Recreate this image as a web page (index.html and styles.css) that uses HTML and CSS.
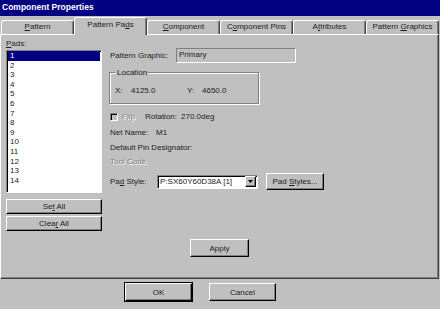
FILE: index.html
```html
<!DOCTYPE html>
<html lang="en">
<head>
    <meta charset="UTF-8">
    <meta name="viewport" content="width=device-width, initial-scale=1.0">
    <title>Component Properties</title>
    <link rel="stylesheet" href="styles.css">
</head>
<body>

    <div class="titlebar">Component Properties</div>

    <div class="tabs">
        <div class="tab"><u>P</u>attern</div>
        <div class="tab active">Pattern Pa<u>d</u>s</div>
        <div class="tab"><u>C</u>omponent</div>
        <div class="tab">C<u>o</u>mponent Pins</div>
        <div class="tab">A<u>t</u>tributes</div>
        <div class="tab">Pattern <u>G</u>raphics</div>
    </div>

    <div class="panel">
        <div class="columns">
            <div class="left">
                <div class="label"><u>P</u>ads:</div>
                <div class="listbox">
                    <div class="item selected">1</div>
                    <div class="item">2</div>
                    <div class="item">3</div>
                    <div class="item">4</div>
                    <div class="item">5</div>
                    <div class="item">6</div>
                    <div class="item">7</div>
                    <div class="item">8</div>
                    <div class="item">9</div>
                    <div class="item">10</div>
                    <div class="item">11</div>
                    <div class="item">12</div>
                    <div class="item">13</div>
                    <div class="item">14</div>
                </div>
                <button class="btn wide first">Se<u>t</u> All</button>
                <button class="btn wide">Clea<u>r</u> All</button>
            </div>

            <div class="right">
                <div class="row graphic-row">
                    <span class="graphic-label">Pattern Graphic:</span>
                    <div class="field">Primary</div>
                </div>

                <div class="group">
                    <span class="group-title">Location</span>
                    <div class="row coords">
                        <span class="coord-x">X:</span>
                        <span class="coord-xv">4125.0</span>
                        <span class="coord-y">Y:</span>
                        <span>4650.0</span>
                    </div>
                </div>

                <div class="row flip-row">
                    <span class="checkbox"></span>
                    <span class="disabled flip">Flip</span>
                    <span class="rot-label">Rotation:</span>
                    <span>270.0deg</span>
                </div>

                <div class="row net-row">
                    <span class="net-label">Net Name:</span>
                    <span>M1</span>
                </div>
                <div class="row pin-row">Default Pin Designator:</div>
                <div class="row tool-row disabled">Tool Code</div>

                <div class="row style-row">
                    <span class="style-label">Pa<u>d</u> Style:</span>
                    <div class="select">
                        <span class="select-text">P:SX60Y60D38A [1]</span>
                        <span class="arrow">
                            <svg width="5" height="3" viewBox="0 0 5 3"><path d="M0 0h5L2.5 3z" fill="#000"/></svg>
                        </span>
                    </div>
                    <button class="btn styles-btn">Pad <u>S</u>tyles...</button>
                </div>
            </div>
        </div>

        <div class="apply-row">
            <button class="btn apply">Apply</button>
        </div>
    </div>

    <div class="footer">
        <button class="btn default">OK</button>
        <button class="btn cancel">Cancel</button>
    </div>

</body>
</html>
```

FILE: styles.css
```css
* {
    margin: 0;
    padding: 0;
    box-sizing: border-box;
}

body {
    width: 440px;
    height: 309px;
    overflow: hidden;
    background: #c0c0c0;
    color: #1c1c1c;
    font-family: 'Liberation Sans', Arial, sans-serif;
    font-size: 8px;
    line-height: 9px;
}

u {
    text-decoration: underline;
    text-underline-offset: 1px;
}

.titlebar {
    height: 16px;
    background: #000080;
    color: #fff;
    font-weight: bold;
    font-size: 8.5px;
    line-height: 15px;
    padding-left: 2px;
}

/* tabs */

.tabs {
    height: 18px;
    display: flex;
    align-items: flex-end;
    padding-left: 1px;
}

.tab {
    width: 73px;
    height: 14px;
    text-align: center;
    line-height: 12px;
    border-top: 1px solid #fff;
    border-left: 1px solid #fff;
    border-right: 1px solid #404040;
    border-radius: 3px 3px 0 0;
    box-shadow: inset -1px 0 0 #808080;
}

.tab.active {
    height: 18px;
    margin-bottom: -1px;
    line-height: 14px;
    background: #c0c0c0;
    position: relative;
    z-index: 1;
}

/* panel */

.panel {
    width: 439px;
    height: 245px;
    border-top: 1px solid #fff;
    border-left: 1px solid #fff;
    border-right: 1px solid #404040;
    border-bottom: 1px solid #404040;
    box-shadow: inset -1px -1px 0 #808080;
    padding: 4px 0 0 5px;
}

.columns {
    display: flex;
    gap: 8px;
}

.left {
    width: 96px;
}

.label {
    height: 9px;
}

.listbox {
    margin-top: 2px;
    height: 143px;
    background: #fff;
    border-top: 1px solid #808080;
    border-left: 1px solid #808080;
    border-right: 1px solid #fff;
    border-bottom: 1px solid #fff;
    box-shadow: inset 1px 1px 0 #000;
    padding: 0 1px;
}

.item {
    height: 9.6px;
    line-height: 9.6px;
    padding-left: 2px;
}

.item.selected {
    background: #000080;
    color: #fff;
}

.btn {
    display: block;
    background: #c0c0c0;
    font-family: inherit;
    font-size: 8px;
    line-height: 9px;
    color: #1c1c1c;
    border-top: 1px solid #fff;
    border-left: 1px solid #fff;
    border-right: 1px solid #000;
    border-bottom: 1px solid #000;
    box-shadow: inset -1px -1px 0 #808080;
}

.btn.wide {
    width: 96px;
    height: 15px;
    margin-top: 2px;
}

.btn.wide.first {
    margin-top: 6px;
}

.right {
    width: 320px;
}

.row {
    display: flex;
    align-items: center;
    height: 9px;
}

.graphic-row {
    margin-top: 9px;
    height: 15px;
}

.graphic-label {
    width: 66px;
}

.field {
    width: 120px;
    height: 15px;
    padding-left: 2px;
    line-height: 11px;
    border-top: 1px solid #808080;
    border-left: 1px solid #808080;
    border-right: 1px solid #fff;
    border-bottom: 1px solid #fff;
}

.group {
    margin-top: 9px;
    margin-left: -1px;
    width: 150px;
    height: 32px;
    border: 1px solid #808080;
    box-shadow: inset 1px 1px 0 #fff, 1px 1px 0 #fff;
    padding: 0 5px;
}

.group-title {
    display: inline-block;
    margin-top: -5px;
    padding: 0 1px 0 2px;
    background: #c0c0c0;
    vertical-align: top;
}

.coords {
    margin-top: 4px;
}

.coord-x {
    width: 16px;
}

.coord-xv {
    width: 56px;
}

.coord-y {
    width: 15px;
}

.flip-row {
    margin-top: 8px;
}

.checkbox {
    width: 8px;
    height: 8px;
    border-top: 1px solid #808080;
    border-left: 1px solid #808080;
    border-right: 1px solid #fff;
    border-bottom: 1px solid #fff;
    box-shadow: inset 1px 1px 0 #000;
    margin-right: 4px;
}

.disabled {
    color: #808080;
    text-shadow: 1px 1px 0 #fff;
}

.flip {
    width: 23px;
}

.rot-label {
    width: 36px;
}

.net-row {
    margin-top: 7px;
}

.net-label {
    width: 46px;
}

.pin-row {
    margin-top: 6px;
}

.tool-row {
    margin-top: 5px;
}

.style-row {
    margin-top: 7px;
    height: 17px;
}

.style-label {
    width: 47px;
}

.select {
    width: 101px;
    height: 14px;
    display: flex;
    align-items: center;
    background: #fff;
    border-top: 1px solid #808080;
    border-left: 1px solid #808080;
    border-right: 1px solid #fff;
    border-bottom: 1px solid #fff;
    box-shadow: inset 1px 1px 0 #000;
    padding: 1px 1px 1px 2px;
}

.select-text {
    flex: 1;
}

.arrow {
    width: 11px;
    height: 11px;
    display: flex;
    align-items: center;
    justify-content: center;
    background: #c0c0c0;
    border-top: 1px solid #fff;
    border-left: 1px solid #fff;
    border-right: 1px solid #000;
    border-bottom: 1px solid #000;
    box-shadow: inset -1px -1px 0 #808080;
}

.arrow svg {
    display: block;
}

.styles-btn {
    width: 58px;
    height: 17px;
    margin-left: 8px;
}

.apply-row {
    display: flex;
    justify-content: center;
    padding-right: 5px;
    margin-top: 8px;
}

.btn.apply {
    width: 59px;
    height: 18px;
}

/* dialog buttons */

.footer {
    display: flex;
    padding: 4px 0 0 125px;
    gap: 17px;
}

.footer .btn {
    width: 67px;
    height: 18px;
}

.btn.default {
    outline: 1px solid #000;
}
```
